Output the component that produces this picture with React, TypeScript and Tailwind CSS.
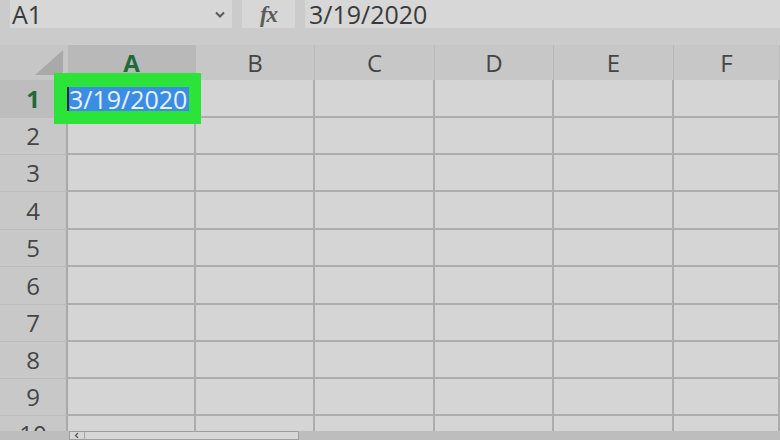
import type { ReactNode } from "react";

const COLS = [
  { id: "A", w: "w-[128px]" },
  { id: "B", w: "w-[119px]" },
  { id: "C", w: "w-[120px]" },
  { id: "D", w: "w-[119px]" },
  { id: "E", w: "w-[120px]" },
  { id: "F", w: "flex-1" },
];

// row heights tuned so the grid lines land where the screenshot has them
const ROWS = [
  { n: 1, h: "h-[38px]" },
  { n: 2, h: "h-[37px]" },
  { n: 3, h: "h-[37px]" },
  { n: 4, h: "h-[38px]" },
  { n: 5, h: "h-[37px]" },
  { n: 6, h: "h-[38px]" },
  { n: 7, h: "h-[37px]" },
  { n: 8, h: "h-[37px]" },
  { n: 9, h: "h-[37px]" },
];

function Box({ className, children }: { className: string; children?: ReactNode }) {
  return <div className={`bg-[#d7d7d7] flex items-center ${className}`}>{children}</div>;
}

function FormulaBar() {
  return (
    <div className="flex h-[28px] pl-[10px] gap-[10px] text-[#3a3a3a]">
      <Box className="w-[222px] justify-between pl-[2px] pr-[7px]">
        <span className="text-[25px] leading-none">A1</span>
        <svg width="10" height="7" viewBox="0 0 10 7" className="mt-[1px]">
          <path d="M1 1.5 L5 5.5 L9 1.5" fill="none" stroke="#5a5a5a" strokeWidth="2" />
        </svg>
      </Box>
      <Box className="w-[53px] justify-center">
        <span className="font-['Liberation_Serif',serif] italic font-bold text-[23px] leading-none text-[#5c5c5c] tracking-[-1px]">
          fx
        </span>
      </Box>
      <Box className="flex-1 pl-[4px]">
        <span className="text-[25px] leading-none">3/19/2020</span>
      </Box>
    </div>
  );
}

function HeaderRow() {
  return (
    <div className="flex h-[35px]">
      <div className="w-[68px] bg-[#c6c6c6] relative">
        <svg width="68" height="35" viewBox="0 0 68 35" className="absolute inset-0">
          <polygon points="63,5 63,30 35,30" fill="#a9a9a9" />
        </svg>
      </div>
      {COLS.map((c) => (
        <div
          key={c.id}
          className={`${c.w} flex items-center justify-center text-[24px] leading-none border-r border-[#b9b9b9] ${
            c.id === "A" ? "bg-[#b9b9b9] font-bold text-[#1f6b3a]" : "bg-[#c7c7c7] text-[#454545]"
          }`}
        >
          {c.id}
        </div>
      ))}
    </div>
  );
}

function Row({ n, h }: { n: number; h: string }) {
  const active = n === 1;
  return (
    <div className={`flex ${h}`}>
      <div
        className={`w-[68px] flex items-center justify-center text-[24px] leading-none border-b border-r-2 border-b-[#bcbcbc] border-r-[#a9a9a9] ${
          active ? "bg-[#bdbdbd] font-bold text-[#1f6b3a]" : "bg-[#c8c8c8] text-[#454545]"
        }`}
      >
        {n}
      </div>
      {COLS.map((c) => (
        <div key={c.id} className={`${c.w} bg-[#d5d5d5] border-b-2 border-r-2 border-[#adadad]`} />
      ))}
    </div>
  );
}

export default function App() {
  return (
    <div className="w-[780px] h-[440px] overflow-hidden bg-[#cbcbcb] relative font-['Open_Sans',sans-serif]">
      <FormulaBar />
      <div className="mt-[17px]">
        <HeaderRow />
        {ROWS.map((r) => (
          <Row key={r.n} n={r.n} h={r.h} />
        ))}
        <div className="h-[15px] overflow-hidden">
          <Row n={10} h="h-[37px]" />
        </div>
        <div className="h-[9px] bg-[#bdbdbd] flex pl-[69px]">
          <div className="w-[230px] h-full bg-[#d6d6d6] border border-[#9f9f9f] flex">
            <div className="w-[15px] h-full border-r border-[#a6a6a6] flex items-start justify-center">
              <svg width="6" height="6" viewBox="0 0 6 6">
                <path d="M4 1 L1.5 3.5 L4 6" fill="none" stroke="#555" strokeWidth="1.2" />
              </svg>
            </div>
          </div>
        </div>
      </div>

      {/* active cell highlight */}
      <div className="absolute left-[54px] top-[73px] w-[147px] h-[51px] bg-[#2ce33a] flex items-center pl-[13px]">
        <span className="w-[2px] h-[24px] bg-[#1e2a3a]" />
        <span className="bg-[#3b8de4] text-[#e9f1ff] text-[25px] leading-[24px] pr-[2px]">3/19/2020</span>
      </div>
    </div>
  );
}
